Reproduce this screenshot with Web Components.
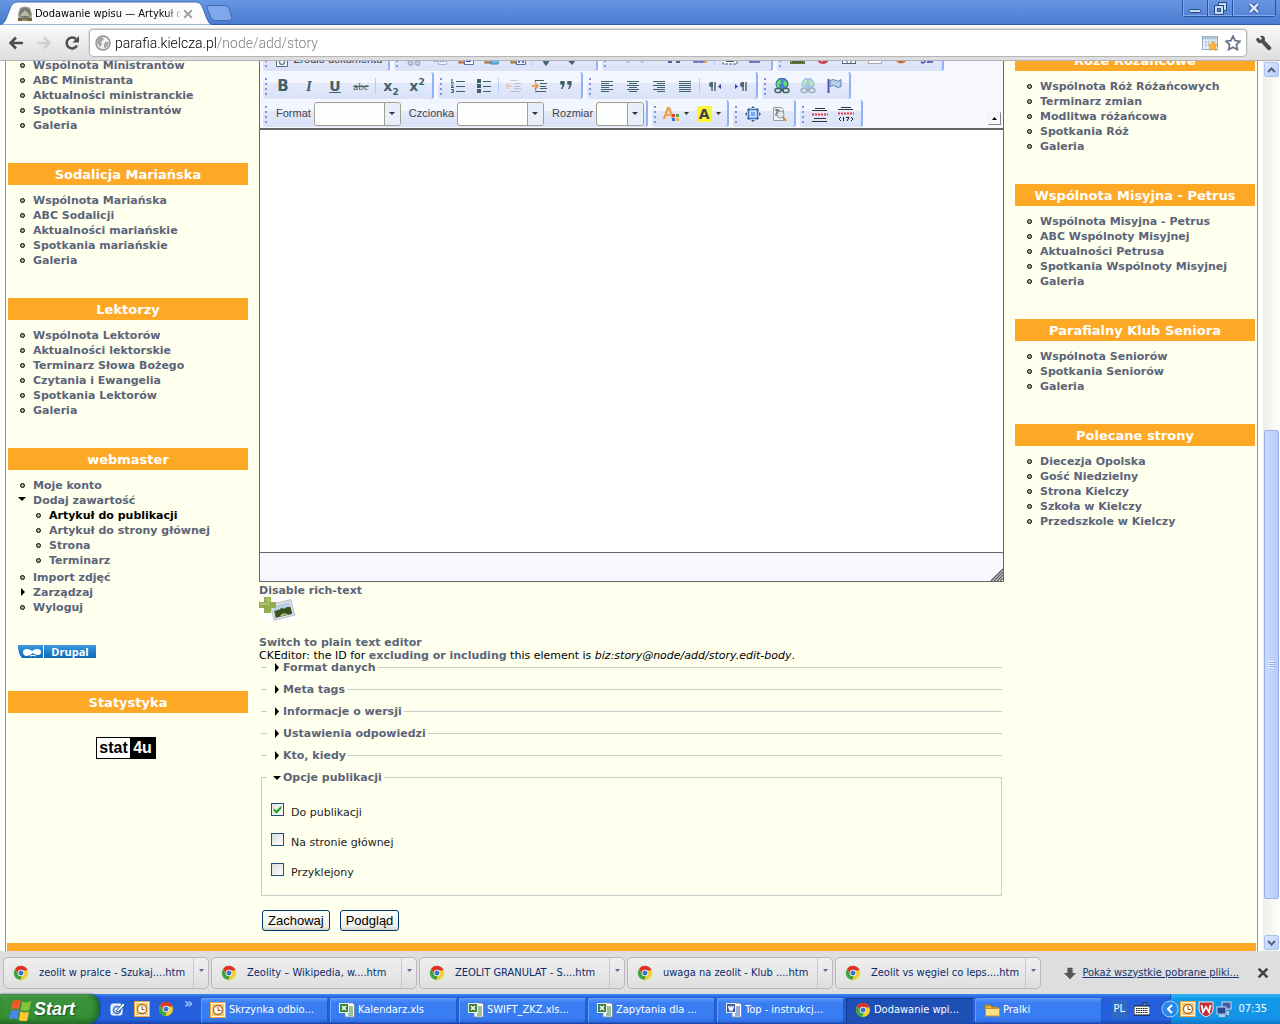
<!DOCTYPE html>
<html lang="pl">
<head>
<meta charset="utf-8">
<title>Dodawanie wpisu — Artykuł do publikacji</title>
<style>
html,body{margin:0;height:100%;overflow:hidden;background:#fff}
body{font:11px/15px "DejaVu Sans",sans-serif;color:#000;--ui:"DejaVu Sans Condensed","DejaVu Sans",sans-serif;--orange:#fea926;--link:#5b6478}
</style>
</head>
<body>
<desktop-screen></desktop-screen>
<script>
const define = (tag, css, html) => customElements.define(tag, class extends HTMLElement {
  connectedCallback() {
    if (this.shadowRoot) return;
    const root = this.attachShadow({ mode: 'open' });
    root.innerHTML = '<style>*{box-sizing:border-box}button{font:inherit;color:inherit;padding:0;border:0;background:none}' + css + '</style>' + (typeof html === 'function' ? html(this) : html);
  }
});

const lines = (rows, color = '#3f6364') => rows.map(([x, y, w]) => `<rect x="${x}" y="${y}" width="${w}" height="1" fill="${color}"/>`).join('');
const chromeBall = '<circle cx="8" cy="8" r="7" fill="#f7d024"/><path d="M2 4.200A7 7 0 0 1 14.600 5.500H8A3 3 0 0 0 5.400 9.500Z" fill="#d8382b"/><path d="M2 4.200 5.300 9.600A3 3 0 0 0 8.600 11L7.400 15A7 7 0 0 1 2 4.200Z" fill="#3da542"/><circle cx="8" cy="8" r="3.300" fill="#fff"/><circle cx="8" cy="8" r="2.500" fill="#3c73c9"/>';
const outlook = '<rect width="16" height="16" fill="#e9a53c"/><rect x="1" y="1" width="14" height="14" fill="#fff6dc"/><rect x="2" y="2" width="12" height="12" fill="#f3c878"/><circle cx="8" cy="8" r="4.500" fill="#fff" stroke="#b56f18" stroke-width="1.300"/><path d="M8 5v3.500H10.500" fill="none" stroke="#8a5212"/>';
const office = (c, mark) => `<path d="M6 1h8l1.500 2v12H6z" fill="#fff" stroke="#7b8ba5"/><path d="M9 5h5M9 7h5M9 9h5M9 11h5M9 13h5" stroke="${c}"/><rect x=".5" y="1.500" width="9" height="9" fill="${c}" stroke="#e8f0e8"/><path d="${mark}" fill="none" stroke="#fff" stroke-width="1.500"/>`;
const globe = '<circle cx="8" cy="6" r="6" fill="#4a7fd4" stroke="#2d62a8"/><path d="M4 2.500 7 1.500 7 5 5 7 6 10 3 9 2.500 5ZM9.500 2 13 4.500 13 8 10.500 8.500 9.500 5.500Z" fill="#66dd6a"/><rect x="1" y="10.500" width="6" height="4" rx="2" fill="#d7e2e2" stroke="#3f6364" stroke-width="1.400"/><rect x="9" y="10.500" width="6" height="4" rx="2" fill="#d7e2e2" stroke="#3f6364" stroke-width="1.400"/><path d="M6 12.500h4" stroke="#3f6364" stroke-width="1.400"/>';
const paste = extra => `<rect x="1" y="2" width="10" height="11" fill="#d89441" stroke="#9c6324"/><rect x="4" y="1" width="4" height="3" fill="#888"/>${extra}`;
const ICONS = {
  source: '<path d="M2.500 1.500h11v13h-11z" fill="#fff" stroke="#4d6b7d"/><circle cx="8" cy="10" r="2.500" fill="none" stroke="#68869c" stroke-width="1.500"/>',
  cut: '<g opacity=".45" fill="none" stroke="#5a6fae" stroke-width="1.800"><path d="M5 1 10 11M11 1 6 11"/><circle cx="4.500" cy="13" r="2"/><circle cx="11.500" cy="13" r="2"/></g>',
  copy: '<g opacity=".35"><path d="M1.500 1.500h8v10h-8z" fill="#fff" stroke="#557"/><path d="M6.500 4.500h8v10h-8z" fill="#fff" stroke="#557"/>' + lines([[8,7,5],[8,9,5],[8,11,5]]) + '</g>',
  paste: paste('<path d="M6.500 6.500h9v8h-9z" fill="#fff" stroke="#536ea8"/>' + lines([[8,9,6],[8,11,5]], '#44c')),
  pasteText: paste('<path d="M6 7h9l-1 7H7z" fill="#68b9e8" stroke="#3487b8"/>'),
  pasteWord: paste('<path d="M6.500 6.500h9v8h-9z" fill="#fff" stroke="#536ea8"/><path d="m8 9 1 4 2-4 2 4 1-4" fill="none" stroke="#44c"/>'),
  print: '<path d="M2 8 6 14 14 2" fill="none" stroke="#3f6364" stroke-width="2.500"/>',
  spell: '<path d="M3 9 7 13 14 4" fill="none" stroke="#3f6364" stroke-width="2.500"/>',
  undo: '<path d="M14 13Q14 6 6 6M8 2 3 6 8 10" fill="none" stroke="#b9c0da" stroke-width="2.500"/>',
  redo: '<path d="M2 13Q2 6 10 6M8 2 13 6 8 10" fill="none" stroke="#b9c0da" stroke-width="2.500"/>',
  find: '<path d="M2 4h4v9H2zM10 4h4v9h-4zM6 7h4v3H6z" fill="#5b60a0"/>',
  replace: '<path d="M2 4v8h4V8H2M8 3v9h3V8H8" fill="none" stroke="#5b54b5" stroke-width="1.500"/><path d="M14 7h-2v5h3" fill="none" stroke="#e08c38" stroke-width="1.500"/>',
  selectAll: '<rect x="1" y="1" width="14" height="13" fill="#fff" stroke="#41627c" stroke-dasharray="3 1"/><path d="M4 11h8M4 7h8" stroke="#3f6364" stroke-width="2"/>',
  eraser: '<path d="M5 4h9l-3 8H2z" fill="#dfe4ff" stroke="#5753b5" stroke-width="1.500"/>',
  image: '<rect x="1.500" y="2.500" width="14" height="11" fill="#8cb850" stroke="#5d7542"/><path d="M2 13 7 7 10 10 13 8 15 13z" fill="#476c2e"/>',
  flash: '<circle cx="8" cy="8" r="6" fill="#c8403c"/><path d="M11 4Q8 4 7 12M6 8h4" fill="none" stroke="#fff"/>',
  table: '<rect x="1.500" y="2.500" width="13" height="11" fill="#fff" stroke="#4c6770"/><path d="M2 6h12M2 10h12M6 3v10M10 3v10" stroke="#4c6770"/>',
  hr: '<rect x="1.500" y="1.500" width="13" height="12" fill="#fff" stroke="#aaa"/><path d="M4 10h8" stroke="#999"/>',
  smile: '<circle cx="8" cy="7" r="6" fill="#f39a40" stroke="#c65e28"/><path d="M4 9q4 4 8 0" fill="none" stroke="#803018" stroke-width="1.500"/>',
  special: '<path d="M2 5h4L4 8q3 0 2 3T2 12M9 5h5L9 12h5" fill="none" stroke="#5148b0" stroke-width="1.600"/>',
  ol: lines([[6,3,9],[6,8,9],[6,13,9]]) + '<path d="M2 1v4M1 2h1M1 5h3M1 7h2v1L1 9.500h3M1 11.500h2.500v3H1M2 13h1" fill="none" stroke="#3f6364"/>',
  ul: '<path d="M1 1h4v4H1zM1 6h4v4H1zM1 11h4v4H1z" fill="#3f6364"/>' + lines([[7,3,8],[7,8,8],[7,13,8]]),
  outdent: '<g opacity=".4"><path d="M0 8h6M3 5 0 8 3 11" fill="none" stroke="#e79642" stroke-width="1.500"/>' + lines([[4,2,8],[8,5,7],[8,8,6],[8,10,7],[4,13,10]], '#7c8794') + '</g>',
  indent: '<path d="M0 8h6M3 5 6 8 3 11" fill="none" stroke="#eb9330" stroke-width="1.600"/>' + lines([[3,2,9],[8,5,7],[8,8,6],[8,10,7],[3,13,11]]) + '<path d="M3 3.500h2M3 11.500h2" stroke="#3f6364" stroke-dasharray="1 1"/>',
  quote: '<path d="M3 3h3.500q1 3-2 8H3q1.500-3 1.500-4Q2 7 2 5t1-2ZM10 3h3.500q1 3-2 8H10q1.500-3 1.500-4Q9 7 9 5t1-2Z" fill="#3f6364"/>',
  left: lines([[2,3,12],[2,5,8],[2,7,12],[2,9,8],[2,11,12],[2,13,8]]),
  center: lines([[2,3,12],[4,5,8],[2,7,12],[4,9,8],[2,11,12],[4,13,8]]),
  right: lines([[2,3,12],[6,5,8],[2,7,12],[6,9,8],[2,11,12],[6,13,8]]),
  justify: lines([[2,3,12],[2,5,12],[2,7,12],[2,9,12],[2,11,12],[2,13,12]]),
  ltr: '<path d="M5 4v9M8 4v9" stroke="#4f666d" stroke-width="1.500"/><path d="M9 4H4q-2 0-2 2.500T4 9h2V4Z" fill="#4f666d"/><path d="M14 6v5L11 8.500Z" fill="#3e3caa"/>',
  rtl: '<path d="M10 4v9M13 4v9" stroke="#4f666d" stroke-width="1.500"/><path d="M14 4H9q-2 0-2 2.500T9 9h2V4Z" fill="#4f666d"/><path d="M2 6v5l3-2.500Z" fill="#3e3caa"/>',
  link: globe,
  unlink: '<g opacity=".4">' + globe + '</g>',
  flag: '<path d="M2.500 1v14" stroke="#5551b8" stroke-width="2"/><path d="M4 2.500q4-2 6 0t5-1v7q-3 2-5 0t-6 0z" fill="#b9d1e6" stroke="#5a87b8"/>',
  maximize: '<rect x="3.500" y="3.500" width="9" height="9" fill="#bfe0ff" stroke="#3d73c4" stroke-width="1.500"/><path d="M6 6h4v4H6z" fill="#7eabec"/><path d="M6 2h4L8 0ZM6 14h4l-2 2ZM2 6v4L0 8ZM14 6v4l2-2Z" fill="#3f6364"/><path d="M3 5Q2 2 5 3M13 5q1-3-2-2M3 11q-1 3 2 2M13 11q1 3-2 2" fill="none" stroke="#3f6364"/>',
  blocks: '<path d="M2.500 1.500h8l2 2v11h-10z" fill="#f3f3f3" stroke="#999"/><path d="M4 4h4v3H5v3M6 3v4" fill="none" stroke="#555"/><circle cx="9.500" cy="8.500" r="3.500" fill="#dfe6ec" stroke="#8c969e"/><path d="m12 11 3 4" stroke="#d08a32" stroke-width="2"/>',
  break: lines([[3,2,10],[0,4,15],[2,12,12],[0,15,15]], '#333') + '<path d="M0 8.500h16" stroke="#e2363c" stroke-width="2" stroke-dasharray="2 1"/>',
  pagebreak: lines([[3,1,10],[0,3,15]], '#333') + '<path d="M0 7.500h16" stroke="#e2363c" stroke-width="2" stroke-dasharray="2 1"/><path d="M3 11 1 13 3 15M13 11l2 2-2 2M5.500 11v4M8 11.500h3L9 15" fill="none" stroke="#222"/>',
  back: '<path d="M15 8H3M8 2.500 2.500 8 8 13.500" fill="none" stroke="#4d4d4d" stroke-width="2.600"/>',
  forward: '<path d="M1 8H13M8 2.500 13.500 8 8 13.500" fill="none" stroke="#cfcfcf" stroke-width="2.600"/>',
  reload: '<path d="M13 10.500A5.500 5.500 0 1 1 12 4" fill="none" stroke="#4d4d4d" stroke-width="2.500"/><path d="M15 1v6.500H8.500Z" fill="#4d4d4d"/>',
  world: '<circle cx="8" cy="8" r="7" fill="#eee" stroke="#929292" stroke-width="1.500"/><path d="M3 3 7 2 9 4 6 7 7 9 5 12 2 8ZM10 7 14 7 12 12 9 13 9 10Z" fill="#a4a4a4"/>',
  calendar: '<rect x=".5" y="1.500" width="15" height="13" fill="#f5faff" stroke="#90a9c0"/><path d="M1 3h14" stroke="#a9c3da" stroke-width="3"/><path d="M1 7h14M1 10h14M4 5v9M7 5v9M10 5v9M13 5v9" stroke="#b5c7d6"/><path d="m11 6 1.500 3 3 .5-2 2.500.5 3.500-3-1.500-3 1.500.5-3.500L6.500 9.500l3-.5Z" fill="#ffb62e" stroke="#e28e1c" stroke-width=".5"/>',
  star: '<path d="m8 1 2.100 4.600 5 .6-3.700 3.400 1 5L8 12.200 3.600 14.600l1-5L.9 6.200l5-.6Z" fill="#fff" stroke="#66738a" stroke-width="1.700"/>',
  wrench: '<path d="M2 2.500 4.500 5 6 3.500 4 1Q8 0 9 3l-.3 2.500L15 12q1 2-1 3t-3-1L5.500 8Q1 9 0 4Z" fill="#4d4d4d"/>',
  favicon: '<path d="M3 2Q8-1 13 2l2 6-1 7H2L1 8Z" fill="#9b9484"/><circle cx="8" cy="7" r="5" fill="#6f7672"/><path d="M4 8l4-4 4 4v2H4z" fill="#b9b6a4"/><path d="M1 12h14v3H1z" fill="#6d6444"/><path d="M5 14h5" stroke="#c9b87c"/>',
  close: '<path d="m3 3 10 10M13 3 3 13" stroke="#a0a0a0" stroke-width="2.500"/>',
  closeDark: '<path d="m3 3 10 10M13 3 3 13" stroke="#444" stroke-width="3"/>',
  download: '<path d="M5 2h6v6h4l-7 7-7-7h4z" fill="#555"/>',
  chrome: chromeBall,
  outlook,
  excel: office('#39823c', 'M3 4l4 4M7 4l-4 4'),
  word: office('#3558a8', 'M2.500 4 4 8l1-3 1 3 1.500-4'),
  folder: '<path d="M1 3h5l2 2h6v3H1z" fill="#e8b33c" stroke="#a87716"/><path d="M1.500 14V6.500h14V14z" fill="#fbe289" stroke="#c8912a"/>',
  desktop: '<rect x="1" y="3" width="11" height="11" rx="2" fill="#dcebff" stroke="#fff"/><circle cx="7" cy="9" r="3.500" fill="none" stroke="#3a77c4" stroke-width="1.500"/><path d="M6 10 13 2l2 2-7 7Z" fill="#fff" stroke="#235a9d"/>',
  winflag: '<path d="M3 3q3-2 5.500-.5L7.500 8Q5 7 2 8.500Z" fill="#ee5a2c"/><path d="M9.500 3q3 1.500 6-.5l-1.300 6q-3 1.500-5.700 0Z" fill="#86c43c"/><path d="M1.800 9.500q3-1.500 5.500-.3L6.300 15q-2.500-1.500-5.700 0Z" fill="#4a86ea"/><path d="M8.300 9.500q3 1.500 5.700.2l-1.200 6q-3 1.300-5.600-.3Z" fill="#fbc82f"/>',
  keyboard: '<path d="M9 4V2h4M0 5h16v9H0z" fill="#fff" stroke="#111"/><path d="M2 7.500h12M2 9.500h12M2 11.500h12" stroke="#111" stroke-dasharray="1.500 .8"/>',
  shield: '<path d="M1 1h14v7q0 5-7 8-7-3-7-8z" fill="#c52c34" stroke="#eee"/><path d="M3.500 4 5 11 8 6l3 5 1.500-7" fill="none" stroke="#fff" stroke-width="1.800"/>',
  network: '<rect x="6" y="1" width="9" height="7" fill="#3d5fae" stroke="#cfd9ee"/><rect x="1" y="6" width="9" height="7" fill="#28488f" stroke="#cfd9ee"/><path d="M3 15h6M12 10v4" stroke="#ccc" stroke-width="2"/>'
};
define('ui-icon', ':host{display:block;width:16px;height:16px;flex:none}svg{display:block;width:100%;height:100%}', el => `<svg viewBox="0 0 16 16" aria-hidden="true">${ICONS[el.getAttribute('name')]}</svg>`);

/* ---------- browser frame ---------- */
define('browser-titlebar', `
:host{display:flex;height:25px;background:linear-gradient(#6896e2,#4a7bd2);border-bottom:1px solid #2f5ba8;align-items:flex-start;font:11px/14px var(--ui)}
.tab{position:relative;width:212px;height:25px;display:flex;align-items:center;gap:2px;padding:2px 18px 0 17px;margin-bottom:-1px}
.shape{position:absolute;left:0;top:0}
ui-icon,.title,.x{position:relative}
.x ui-icon{width:12px;height:12px}
.title{flex:1;min-width:0;overflow:hidden;white-space:nowrap;-webkit-mask:linear-gradient(90deg,#000 90%,rgba(0,0,0,.2))}
.new{margin:5px 0 0 -6px}
.ctl{margin-left:auto;margin-right:4px;display:flex;border:1px solid #2c539b;border-top:0;border-radius:0 0 4px 4px;height:17px}
.ctl button{width:25px;display:grid;place-items:center;border-right:1px solid #2c539b;box-shadow:inset 1px -1px #84aaea}.ctl button:last-child{width:42px;border:0}`, `
<div class="tab"><svg class="shape" width="212" height="25" aria-hidden="true"><path d="M0 25Q4 24 6 19L11 6Q13 2 17 2H196Q200 2 202 6L207 19Q209 24 212 25Z" fill="#fbfbfb" stroke="#416db5" stroke-width="1"/></svg>
<ui-icon name="favicon"></ui-icon><span class="title">Dodawanie wpisu — Artykuł do</span><button class="x" aria-label="Zamknij kartę"><ui-icon name="close"></ui-icon></button></div>
<button class="new" aria-label="Nowa karta"><svg width="28" height="16" style="display:block"><path d="M2 .5H19q3 0 4 3l3 9q0 3-3 3H9q-3 0-4-3L1 3Q0 .5 2 .5Z" fill="#80a7e9" stroke="#3f6cb6"/></svg></button>
<div class="ctl"><button aria-label="Minimalizuj"><svg width="12" height="12"><rect x=".5" y="7.500" width="11" height="3" rx="1" fill="#c5daf8" stroke="#27477d"/></svg></button><button aria-label="Przywróć"><svg width="13" height="13"><path d="M4.500.500h8v8h-3v-5h-5z" fill="#c5daf8" stroke="#27477d"/><path d="M.5 3.500h9v9h-9z" fill="#c5daf8" stroke="#27477d"/><path d="M3.500 6.500h3v3h-3z" fill="#5d8ad8" stroke="#27477d"/></svg></button><button aria-label="Zamknij"><svg width="12" height="12"><path d="m2 2 8 8M10 2l-8 8" stroke="#27477d" stroke-width="4.500"/><path d="m2 2 8 8M10 2l-8 8" stroke="#d3e3fa" stroke-width="2.500"/></svg></button></div>`);

define('browser-toolbar', `
:host{display:flex;align-items:center;height:36px;padding:0 8px;background:linear-gradient(#fafafa,#dedede);border-bottom:1px solid #b2b2bc}
.nav{display:flex;gap:12px;margin-right:9px}
.box{flex:1;height:28px;display:flex;align-items:center;gap:7px;padding:0 5px;background:#fff;border:1px solid #b6b6b6;border-radius:4px;box-shadow:0 0 0 1px #ddd}
input{flex:1;min-width:0;border:0;outline:0;padding:0;margin-left:-3px;font:300 14px/20px Roboto,sans-serif;background:linear-gradient(90deg,#000 0 101px,#777 101px);-webkit-background-clip:text;background-clip:text;-webkit-text-fill-color:transparent}
.w{margin-left:9px}`, `
<div class="nav"><button aria-label="Wstecz"><ui-icon name="back"></ui-icon></button><button aria-label="Dalej"><ui-icon name="forward"></ui-icon></button><button aria-label="Odśwież"><ui-icon name="reload"></ui-icon></button></div>
<div class="box"><ui-icon name="world"></ui-icon><input aria-label="Adres" value="parafia.kielcza.pl/node/add/story"><ui-icon name="calendar"></ui-icon><ui-icon name="star"></ui-icon></div>
<button class="w" aria-label="Narzędzia"><ui-icon name="wrench"></ui-icon></button>`);

define('scroll-bar', `
:host{display:flex;flex-direction:column;width:17px;flex:none;background:linear-gradient(90deg,#f0f0ea,#fefefb);border-left:1px solid #eeede5;padding:1px 1px 1px 0}
button{height:15px;flex:none;display:grid;place-items:center;border:1px solid #a9bfee;border-radius:2px;background:linear-gradient(135deg,#dde8ff,#b7cbf8)}
.a{flex:354}.b{flex:36}.thumb{flex:468;border:1px solid #98b1e8;border-radius:2px;background:linear-gradient(90deg,#cbdbfe,#b8cbf8);display:grid;place-items:center}`, `
<button aria-label="W górę"><svg width="9" height="6"><path d="M1 5 4.500 1.500 8 5" fill="none" stroke="#4d6185" stroke-width="2"/></svg></button>
<div class="a"></div><div class="thumb"><svg width="7" height="8"><path d="M0 .5h6M0 2.500h6M0 4.500h6M0 6.500h6" stroke="#eef4fe"/><path d="M1 1.500h6M1 3.500h6M1 5.500h6" stroke="#8cb0f8"/></svg></div><div class="b"></div>
<button aria-label="W dół"><svg width="9" height="6"><path d="M1 1 4.500 4.500 8 1" fill="none" stroke="#4d6185" stroke-width="2"/></svg></button>`);

/* ---------- side columns ---------- */
define('side-block', `
:host{display:flow-root;margin-bottom:30px}
h2{margin:0 0 8px;height:22px;font:bold 13px/23px "DejaVu Sans",sans-serif;color:#fff;background:var(--orange);text-align:center}`,
el => `${el.hasAttribute('label') ? `<h2>${el.getAttribute('label')}</h2>` : ''}<div role="list"><slot></slot></div>`);

const MARKS = {
  leaf: '<circle cx="4.500" cy="7.500" r="2" fill="#aaa" stroke="#000"/>',
  open: '<path d="M0 4h8l-4 4z"/>',
  closed: '<path d="M3 3v8l4-4z"/>'
};
define('side-item', `
:host{display:flex;height:15px;padding-left:10px;gap:6px;font-weight:bold;color:var(--link);white-space:nowrap}
:host([sub]){padding-left:26px}:host([last]){margin-bottom:2px}:host([active]){color:#000}
svg{flex:none;color:#000}a{color:inherit;text-decoration:none}`,
el => `<svg width="9" height="15" aria-hidden="true">${MARKS[el.getAttribute('mark') || 'leaf']}</svg><a href="#"><slot></slot></a>`);

/* ---------- editor ---------- */
define('tool-group', `
:host{display:flex;height:27px;padding:0 2px 0 7px;border-right:2px solid #8fb2fa;border-radius:3px;position:relative;background:linear-gradient(#f1f5ff 0,#f4f7fe 38%,#e3e9fb 42%,#dae2f8);align-items:center}
.grip{position:absolute;left:2px;top:6px}`,
`<svg class="grip" width="3" height="17" aria-hidden="true"><path d="M0 0h2v2H0zM0 5h2v2H0zM0 10h2v2H0zM0 15h2v2H0z" fill="#7b92e6"/></svg><slot></slot>`);
define('tool-sep', ':host{display:block;width:4px;height:16px;flex:none;background:linear-gradient(#b4cdfb,#b4cdfb) 1px 0/1px 100% no-repeat}', '');
define('tool-button', `
:host{display:block;width:26px;flex:none}:host([menu]){width:33px}:host([wide]){width:116px}
button{width:100%;height:24px;display:flex;align-items:center;justify-content:center;gap:4px;color:#3f6364;font:bold 15px/18px "DejaVu Sans",sans-serif}
:host([wide]) button{font:11px/15px "Liberation Sans",sans-serif;color:#333;padding-top:4px;white-space:nowrap}
.i{font:italic bold 15px/18px "Liberation Serif",serif}.u{text-decoration:underline;font-size:14px}.s{font:11px/14px "Liberation Serif",serif;text-decoration:line-through}
.x{font-size:14px}sub,sup{font-size:9px;line-height:0}.c{font:bold 17px/17px "Liberation Sans",sans-serif;color:#eba04e}.h{font:bold 14px/16px "DejaVu Sans",sans-serif;background:#fbf53a;width:15px;color:#444}`,
el => {
  const name = el.getAttribute('icon');
  const glyph = {
    bold: '<span>B</span>', italic: '<span class="i">I</span>', underline: '<span class="u">U</span>', strike: '<span class="s">abc</span>',
    sub: '<span class="x">x<sub>2</sub></span>', sup: '<span class="x">x<sup>2</sup></span>',
    color: '<span class="c">A</span><svg width="8" height="8" style="margin:9px 0 0 -7px"><path d="M0 0h3v3H0z" fill="#e04038"/><path d="M4 0h3v3H4z" fill="#5fa344"/><path d="M0 4h3v3H0z" fill="#3a6fd8"/><path d="M4 4h3v3H4z" fill="#f4b730"/></svg>',
    highlight: '<span class="h">A</span>'
  }[name] || `<ui-icon name="${name}"></ui-icon>`;
  return `<button type="button" aria-label="${name}">${glyph}<slot></slot>${el.hasAttribute('menu') ? '<svg width="5" height="3"><path d="M0 0h5L2.500 3z" fill="#333"/></svg>' : ''}</button>`;
});
define('tool-select', `
:host{display:flex;align-items:center;font:11px/15px "Liberation Sans",sans-serif;color:#444;gap:3px;padding:0 2px 0 6px}
:host([small]){padding-right:0}
.c{position:relative;display:block}
select{appearance:none;display:block;width:87px;height:24px;border:1px solid #a0a090;border-radius:3px;background:linear-gradient(#fbfcfe,#fff)}
:host([small]) select{width:48px}
svg{position:absolute;right:1px;top:1px;pointer-events:none}`,
el => `<label for="s">${el.getAttribute('label')}</label><span class="c"><select id="s"><option></option></select><svg width="16" height="22"><path d="M0 0h13q3 0 3 3v16q0 3-3 3H0z" fill="#e9eefb"/><path d="M.5 0v22" stroke="#a0a090"/><path d="M5 9h6l-3 3z" fill="#333"/></svg></span>`);

const tools = s => s.split(' ').map(n => n === '|' ? '<tool-sep></tool-sep>' : `<tool-button icon="${n.replace('+', '')}"${n.endsWith('+') ? ' menu' : ''}></tool-button>`).join('');
const group = s => `<tool-group>${tools(s)}</tool-group>`;
define('rich-editor', `
:host{display:block;border:1px solid #666;border-top:0;background:#f7f8fd}
.row{display:flex;gap:4px;height:28px;padding-left:3px}
.bar{position:relative;border-bottom:2px solid #666}
.up{position:absolute;right:2px;bottom:3px;width:13px;height:13px;border:1px solid;border-color:#eee #888 #888 #eee;display:grid;place-items:center}
textarea{display:block;width:100%;height:422px;border:0;outline:0;resize:none;background:#fff}
.foot{border-top:1px solid #666;height:29px;display:flex;justify-content:flex-end;align-items:flex-end}`, `
<div class="bar">
<div class="row"><tool-group><tool-button icon="source" wide>Źródło dokumentu</tool-button></tool-group>${group('cut copy paste pasteText pasteWord | print spell+')}${group('undo redo find replace | selectAll eraser')}${group('image flash table hr smile special')}</div>
<div class="row">${group('bold italic underline strike | sub sup')}${group('ol ul | outdent indent quote')}${group('left center right justify | ltr rtl')}${group('link unlink flag')}</div>
<div class="row"><tool-group><tool-select label="Format"></tool-select><tool-select label="Czcionka"></tool-select><tool-select label="Rozmiar" small></tool-select></tool-group>${group('color+ highlight+')}${group('maximize blocks')}${group('break pagebreak')}</div>
<button class="up" type="button" aria-label="Zwiń pasek"><svg width="5" height="3"><path d="M0 3h5L2.500 0z"/></svg></button></div>
<textarea aria-label="Treść"></textarea>
<div class="foot"><svg width="13" height="13"><path d="M1 13 13 1M4 13 13 4M7 13 13 7M10 13l3-3" stroke="#555" stroke-width="1.400"/></svg></div>`);

define('form-section', `
:host{display:block}
fieldset{margin:0 2px 9px;padding:0;border:0 solid #ccc;border-top-width:1px;min-width:0}
:host([open]) fieldset{border-width:1px;padding:11px 9px 10px;margin-bottom:14px}
legend{display:flex;align-items:center;gap:2px;margin-left:6px;padding:0 2px 0 6px;line-height:13px;height:13px;font-weight:bold;color:var(--link)}
:host([open]) legend{margin-left:-4px}
a{color:inherit;text-decoration:none}`,
el => `<fieldset><legend><svg width="8" height="9" aria-hidden="true"><path d="${el.hasAttribute('open') ? 'M0 3h8L4 7z' : 'M2 0v9l4-4.500z'}"/></svg><a href="#">${el.getAttribute('label')}</a></legend><slot></slot></fieldset>`);

define('check-option', `
:host{display:flex;height:30px;align-items:center;gap:7px}
input{appearance:none;width:13px;height:13px;margin:0 0 1px;border:1px solid #1c5180;background:linear-gradient(135deg,#dcdcd7,#fff);display:grid;place-items:center}
input:checked{background:linear-gradient(135deg,#e4e4df,#fff)}
input:checked::before{content:"";width:9px;height:9px;background:#21a121;clip-path:polygon(8% 35%,38% 62%,92% 8%,92% 42%,38% 96%,8% 68%)}
label{padding-top:4px;color:#222}`,
el => `<input type="checkbox" id="c"${el.hasAttribute('checked') ? ' checked' : ''}><label for="c">${el.getAttribute('label')}</label>`);
define('xp-button', `:host{display:block}
button{height:21px;padding:0 5px;border:1px solid #003c74;border-radius:3px;background:linear-gradient(#fff,#f0f0ea 80%,#d8d0c4);font:13px/19px "Liberation Sans",sans-serif;color:#000}`, '<button type="submit"><slot></slot></button>');

/* ---------- page ---------- */
const items = a => a.map(t => `<side-item role="listitem">${t}</side-item>`).join('');
define('parish-page', `
:host{display:block;flex:1;min-width:0;padding:0 5px;background:#fff;overflow:hidden}
.sheet{margin-top:-17px;border:solid #8f8fa0;border-width:0 1px;background:#ffffee;padding:0 1px;min-height:100%}
.cols{display:flex;gap:11px;padding:0 1px}
aside{width:240px;flex:none}.l{padding-top:14px}.r{padding-top:5px}
main{flex:1;min-width:0;line-height:13px;padding-bottom:12px}
main a{color:var(--link);font-weight:bold;text-decoration:none}
p{margin:0}.dis{margin-top:2px}.pic{display:block;margin-bottom:14px}
form{margin-top:-1px}
.btns{display:flex;gap:10px;padding-left:3px}
.drupal{display:flex;margin:30px 0 3px 10px;width:78px;height:13px;color:#fff;font:bold 11px/13px "Open Sans",sans-serif;text-decoration:none;background:linear-gradient(#3a9ae0,#0f68b4)}
.drupal span{flex:1;text-align:center;border-left:1px solid #fff}
.stat{display:flex;width:60px;height:22px;margin:24px 0 0 88px;border:1px solid #000;font:bold 16px/20px "Liberation Sans",sans-serif;text-decoration:none;background:#fff;color:#000}
.stat span{flex:1;text-align:center}.stat .k{background:#000;color:#fff;flex:0 0 25px}
footer{height:40px;background:var(--orange)}`, `
<div class="sheet"><div class="cols">
<aside class="l">
<side-block>${items(['Wspólnota Ministrantów','ABC Ministranta','Aktualności ministranckie','Spotkania ministrantów','Galeria'])}</side-block>
<side-block label="Sodalicja Mariańska">${items(['Wspólnota Mariańska','ABC Sodalicji','Aktualności mariańskie','Spotkania mariańskie','Galeria'])}</side-block>
<side-block label="Lektorzy">${items(['Wspólnota Lektorów','Aktualności lektorskie','Terminarz Słowa Bożego','Czytania i Ewangelia','Spotkania Lektorów','Galeria'])}</side-block>
<side-block label="webmaster">
<side-item>Moje konto</side-item><side-item mark="open">Dodaj zawartość</side-item><side-item sub active>Artykuł do publikacji</side-item><side-item sub>Artykuł do strony głównej</side-item><side-item sub>Strona</side-item><side-item sub last>Terminarz</side-item><side-item>Import zdjęć</side-item><side-item mark="closed">Zarządzaj</side-item><side-item>Wyloguj</side-item>
<a class="drupal" href="#"><svg width="25" height="13" aria-hidden="true"><path d="M0 3Q1 10 4 13H0z" fill="#fff"/><path d="M5 7q0-3 4-3 3 0 5 2 2-2 5-2 4 0 4 3t-3 3q-3 0-5-2-3 3-6 3-4 0-4-4Z" fill="#fff"/><path d="M12 11q3-1.500 6 0" stroke="#fff" fill="none"/></svg><span>Drupal</span></a>
</side-block>
<side-block label="Statystyka"><a class="stat" href="#"><span>stat</span><span class="k">4u</span></a></side-block>
</aside>
<main>
<rich-editor></rich-editor>
<p class="dis"><a href="#">Disable rich-text</a></p>
<a href="#" aria-label="Dodaj obraz"><svg class="pic" width="36" height="25"><path d="M0 0h36v25H0z" fill="#fff"/><g transform="rotate(-14 23 13)"><path d="M13 5h21v16H13z" fill="#dfe5ea" stroke="#bbb"/><path d="M15 11h17v8H15z" fill="#506a30"/><path d="M15 7h17v5H15z" fill="#b9cfe4"/><path d="M15 19q2-9 5-6 3-4 5 0 4-3 7 0v6z" fill="#38521e"/><path d="M19 19q4-5 9 0z" fill="#a9bc7a"/></g><path d="M5 0h7v5h5v6h-5v5H5v-5H0V5h5z" fill="#93ad4f"/><path d="M6 1h5v5H1V8h10z" fill="#abc26e"/></svg></a>
<p><a href="#">Switch to plain text editor</a></p>
<p>CKEditor: the ID for <a href="#">excluding or including</a> this element is <em>biz:story@node/add/story.edit-body</em>.</p>
<form onsubmit="return false">
<form-section label="Format danych"></form-section><form-section label="Meta tags"></form-section><form-section label="Informacje o wersji"></form-section><form-section label="Ustawienia odpowiedzi"></form-section><form-section label="Kto, kiedy"></form-section>
<form-section label="Opcje publikacji" open><check-option label="Do publikacji" checked></check-option><check-option label="Na stronie głównej"></check-option><check-option label="Przyklejony"></check-option></form-section>
<div class="btns"><xp-button>Zachowaj</xp-button><xp-button>Podgląd</xp-button></div>
</form>
</main>
<aside class="r">
<side-block label="Róże Różańcowe">${items(['Wspólnota Róż Różańcowych','Terminarz zmian','Modlitwa różańcowa','Spotkania Róż','Galeria'])}</side-block>
<side-block label="Wspólnota Misyjna - Petrus">${items(['Wspólnota Misyjna - Petrus','ABC Wspólnoty Misyjnej','Aktualności Petrusa','Spotkania Wspólnoty Misyjnej','Galeria'])}</side-block>
<side-block label="Parafialny Klub Seniora">${items(['Wspólnota Seniorów','Spotkania Seniorów','Galeria'])}</side-block>
<side-block label="Polecane strony">${items(['Diecezja Opolska','Gość Niedzielny','Strona Kielczy','Szkoła w Kielczy','Przedszkole w Kielczy'])}</side-block>
</aside></div><footer></footer></div>`);

/* ---------- downloads shelf and taskbar ---------- */
define('download-item', `
:host{display:flex;width:206px;height:32px;border:1px solid #b9b9b9;border-radius:5px;background:linear-gradient(#efefef,#dfdfdf);color:#0b2b6b}
.f{flex:1;min-width:0;display:flex;align-items:center;gap:10px;padding-left:9px;white-space:nowrap}
.m{width:15px;border-left:1px solid #c8c8c8;display:grid;place-items:center;padding-bottom:4px}`,
`<button class="f"><ui-icon name="chrome"></ui-icon><span><slot></slot></span></button><button class="m" aria-label="Menu"><svg width="5" height="3"><path d="M0 0h5L2.500 3z" fill="#4c6c9c"/></svg></button>`);
define('download-shelf', `
:host{display:flex;align-items:center;height:43px;gap:2px;padding:0 10px 0 3px;background:#dedede;font:11px/14px var(--ui)}
.all{margin-left:auto;display:flex;align-items:center;gap:5px}a{color:#15356e}
.dl{width:14px;height:14px}.x{margin-left:15px}.x ui-icon{width:14px;height:14px}`, `
<download-item>zeolit w pralce - Szukaj....htm</download-item><download-item>Zeolity – Wikipedia, w....htm</download-item><download-item>ZEOLIT GRANULAT - S....htm</download-item><download-item>uwaga na zeolit - Klub ....htm</download-item><download-item>Zeolit vs węgiel co leps....htm</download-item>
<div class="all"><ui-icon class="dl" name="download"></ui-icon><a href="#">Pokaż wszystkie pobrane pliki...</a></div><button class="x" aria-label="Zamknij"><ui-icon name="closeDark"></ui-icon></button>`);
define('task-button', `
:host{display:block;flex:0 1 127px;min-width:0}
button{width:100%;height:25px;display:flex;align-items:center;gap:3px;padding:0 9px;border-radius:2px;background:linear-gradient(#5a9bf8,#3a7df3 20%,#377cf2 80%,#2c68dc);box-shadow:inset 1px 1px #5f9ff9,inset -1px -1px #2458c4;white-space:nowrap;color:#fff}
:host([active]) button{background:#1d4fb5;box-shadow:inset 1px 1px #123a8a}`,
el => `<button><ui-icon name="${el.getAttribute('icon')}"></ui-icon><span><slot></slot></span></button>`);
define('task-bar', `
:host{display:flex;height:30px;background:linear-gradient(#3f88f0,#245edb 12%,#2560de 85%,#1a44a8);color:#fff;font:11px/14px var(--ui)}
.start{width:99px;display:flex;align-items:center;gap:2px;padding-left:8px;border-radius:0 10px 12px 0;background:linear-gradient(#62ac5e,#3b943b 15%,#359035 75%,#27702a);box-shadow:inset -3px 0 5px #23692a,1px 0 2px #143f91;font:italic bold 18px/24px "Liberation Sans",sans-serif;text-shadow:1px 1px 2px #1d471d}
.start ui-icon{width:24px;height:24px}
.quick{display:flex;align-items:center;gap:8px;padding-left:11px;width:102px}.quick b{align-self:flex-start;font:bold 14px/18px "DejaVu Sans",sans-serif;color:#9fc5ff;margin-left:2px}
.tasks{flex:1;display:flex;align-items:center;gap:2px;padding-top:2px}
.lang{display:flex;align-items:center;gap:7px;margin-right:20px}.lang span{background:#316ac5;padding:2px 2px}
.tray{position:relative;width:110px;display:flex;align-items:center;gap:2px;padding:0 13px 0 9px;background:linear-gradient(#35b5f5,#129ae9 15%,#1394e8 80%,#0d76c8);border-left:1px solid #0d5cb8}
.tray span{margin-left:auto}.tray button{position:absolute;left:-10px;top:6px}`, `
<button class="start"><ui-icon name="winflag"></ui-icon><span>Start</span></button>
<div class="quick"><ui-icon name="desktop"></ui-icon><ui-icon name="outlook"></ui-icon><ui-icon name="chrome"></ui-icon><b>»</b></div>
<div class="tasks"><task-button icon="outlook">Skrzynka odbio...</task-button><task-button icon="excel">Kalendarz.xls</task-button><task-button icon="excel">SWIFT_ZKZ.xls...</task-button><task-button icon="excel">Zapytania dla ...</task-button><task-button icon="word">Top - instrukcj...</task-button><task-button icon="chrome" active>Dodawanie wpi...</task-button><task-button icon="folder">Pralki</task-button></div>
<div class="lang"><span>PL</span><ui-icon name="keyboard"></ui-icon></div>
<div class="tray"><button aria-label="Pokaż ukryte ikony"><svg width="18" height="18" style="display:block"><circle cx="9" cy="9" r="8" fill="#2a86ea" stroke="#9fd2fb"/><path d="M11 5 7 9 11 13" fill="none" stroke="#fff" stroke-width="2"/></svg></button><ui-icon name="outlook"></ui-icon><ui-icon name="shield"></ui-icon><ui-icon name="network"></ui-icon><span>07:35</span></div>`);

define('desktop-screen', ':host{display:flex;flex-direction:column;height:100vh}.view{flex:1;min-height:0;display:flex}', `
<browser-titlebar></browser-titlebar><browser-toolbar></browser-toolbar>
<div class="view"><parish-page></parish-page><scroll-bar></scroll-bar></div>
<download-shelf></download-shelf><task-bar></task-bar>`);
</script>
</body>
</html>
